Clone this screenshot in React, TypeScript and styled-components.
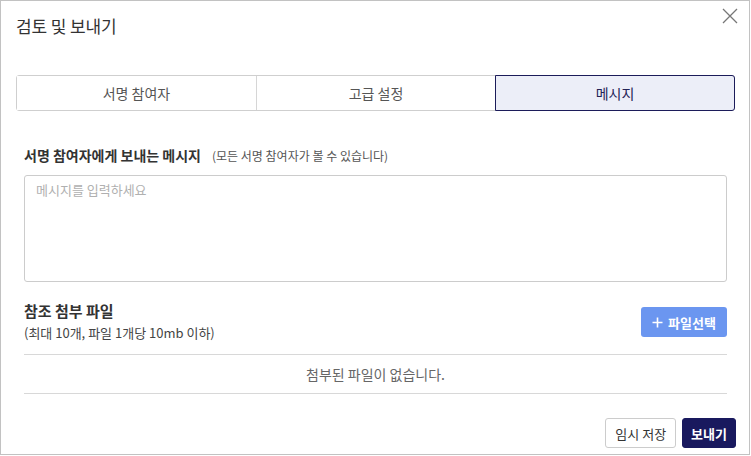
import React from "react";
import styled, { createGlobalStyle } from "styled-components";

const Global = createGlobalStyle`
  html, body { margin: 0; padding: 0; background: #fff; }
  body { font-family: "Noto Sans CJK KR", "Noto Sans", sans-serif; }
  * { box-sizing: border-box; }
`;

const Dialog = styled.div`
  width: 750px;
  height: 455px;
  border: 1px solid #c2c2c2;
  background: #fff;
  display: flex;
  flex-direction: column;
  position: relative;
`;

const Header = styled.div`
  height: 50px;
  padding: 0 15px 2px;
  display: flex;
  align-items: center;
`;

const Title = styled.h1`
  margin: 0;
  font-size: 17px;
  font-weight: 400;
  color: #333;
  letter-spacing: -0.1px;
`;

const CloseButton = styled.button`
  position: absolute;
  top: 6px;
  right: 10px;
  width: 18px;
  height: 18px;
  padding: 0;
  border: none;
  background: none;
  cursor: pointer;
`;

const Tabs = styled.div`
  margin: 24px 14px 0 15px;
  display: grid;
  grid-template-columns: 1fr 1fr 1fr;
  height: 36px;
  border: 1px solid #cfcfcf;
  border-radius: 3px;
`;

const Tab = styled.div<{ $active?: boolean }>`
  display: flex;
  align-items: center;
  justify-content: center;
  font-size: 14px;
  color: ${(p) => (p.$active ? "#222255" : "#555")};
  background: ${(p) => (p.$active ? "#eceef8" : "#fff")};
  border-left: 1px solid #d6d6d6;
  &:first-child { border-left: none; }
  ${(p) =>
    p.$active &&
    `
    margin: -1px -1px -1px 0;
    border: 1px solid #1c1c5a;
    border-radius: 0 3px 3px 0;
  `}
`;

const Body = styled.div`
  padding: 0 22px 0 23px;
  display: flex;
  flex-direction: column;
`;

const LabelRow = styled.div`
  margin-top: 34px;
  display: flex;
  align-items: baseline;
  gap: 11px;
  height: 21px;
`;

const Label = styled.span<{ $size?: number }>`
  font-size: ${(p) => p.$size ?? 14}px;
  line-height: ${(p) => Math.round((p.$size ?? 14) * 1.45)}px;
  font-weight: 700;
  color: #333;
`;

const Note = styled.span`
  font-size: 12px;
  color: #555;
`;

const MessageBox = styled.textarea`
  margin-top: 9px;
  height: 107px;
  width: 100%;
  resize: none;
  border: 1px solid #cccccc;
  border-radius: 3px;
  padding: 4px 11px;
  font-family: inherit;
  font-size: 13px;
  color: #333;
  &::placeholder { color: #b0b0b0; }
  outline: none;
`;

const AttachHead = styled.div`
  margin-top: 18px;
  display: flex;
  justify-content: space-between;
  align-items: flex-start;
`;

const AttachText = styled.div`
  display: flex;
  flex-direction: column;
  gap: 1px;
`;

const SubNote = styled.span`
  font-size: 13px;
  line-height: 19px;
  color: #444;
`;

const PickButton = styled.button`
  margin-top: 7px;
  height: 30px;
  width: 86px;
  border: none;
  border-radius: 3px;
  background: #6b96f0;
  color: #fff;
  font-family: inherit;
  font-size: 13px;
  font-weight: 700;
  display: flex;
  align-items: center;
  justify-content: center;
  gap: 5px;
  cursor: pointer;
`;

const FileList = styled.div`
  margin-top: 12px;
  border-top: 1px solid #d8d8d8;
  border-bottom: 1px solid #d8d8d8;
  height: 40px;
  display: flex;
  align-items: center;
  justify-content: center;
  font-size: 14px;
  color: #666;
`;

const Footer = styled.div`
  margin-top: auto;
  padding: 0 13px 6px 0;
  display: flex;
  justify-content: flex-end;
  gap: 6px;
`;

const Button = styled.button<{ $primary?: boolean }>`
  height: 30px;
  padding: 0 ${(p) => (p.$primary ? "8px" : "9px")};
  border-radius: 3px;
  font-family: inherit;
  font-size: 13px;
  font-weight: ${(p) => (p.$primary ? 700 : 400)};
  border: 1px solid ${(p) => (p.$primary ? "#19195e" : "#cccccc")};
  background: ${(p) => (p.$primary ? "#19195e" : "#fff")};
  color: ${(p) => (p.$primary ? "#fff" : "#333")};
  cursor: pointer;
`;

export default function App() {
  return (
    <>
      <Global />
      <Dialog>
        <Header>
          <Title>검토 및 보내기</Title>
        </Header>
        <CloseButton aria-label="닫기">
          <svg width="18" height="18" viewBox="0 0 18 18">
            <path d="M2 2 L16 16 M16 2 L2 16" stroke="#777" strokeWidth="1.3" fill="none" />
          </svg>
        </CloseButton>
        <Tabs>
          <Tab>서명 참여자</Tab>
          <Tab>고급 설정</Tab>
          <Tab $active>메시지</Tab>
        </Tabs>
        <Body>
          <LabelRow>
            <Label>서명 참여자에게 보내는 메시지</Label>
            <Note>(모든 서명 참여자가 볼 수 있습니다)</Note>
          </LabelRow>
          <MessageBox placeholder="메시지를 입력하세요" />
          <AttachHead>
            <AttachText>
              <Label $size={15}>참조 첨부 파일</Label>
              <SubNote>(최대 10개, 파일 1개당 10mb 이하)</SubNote>
            </AttachText>
            <PickButton>
              <svg width="11" height="11" viewBox="0 0 11 11">
                <path d="M5.5 0.5 V10.5 M0.5 5.5 H10.5" stroke="#fff" strokeWidth="1.6" />
              </svg>
              파일선택
            </PickButton>
          </AttachHead>
          <FileList>첨부된 파일이 없습니다.</FileList>
        </Body>
        <Footer>
          <Button>임시 저장</Button>
          <Button $primary>보내기</Button>
        </Footer>
      </Dialog>
    </>
  );
}
